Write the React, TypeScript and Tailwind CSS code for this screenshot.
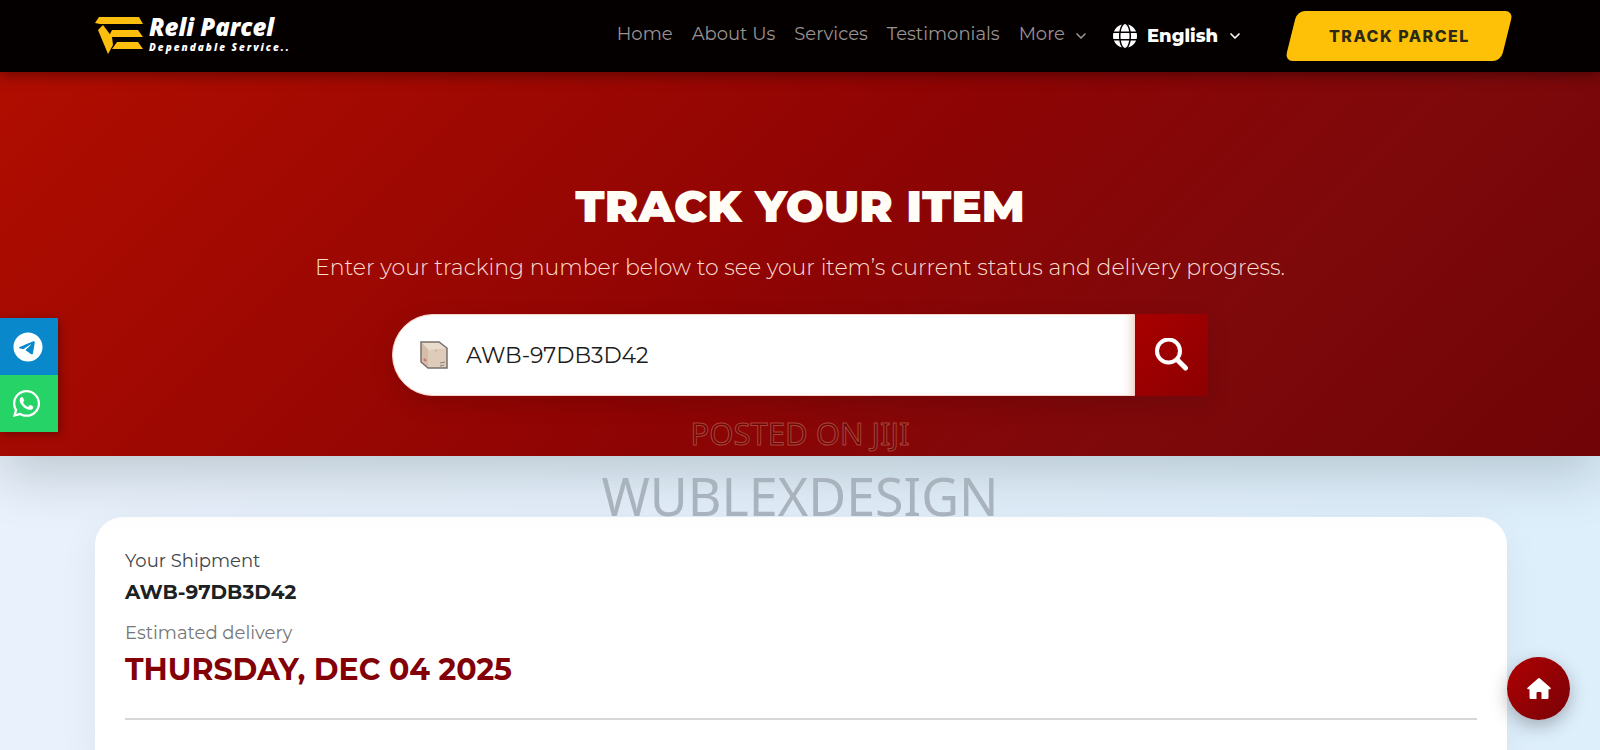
import { FiChevronDown } from "react-icons/fi";
import { FaGlobe, FaTelegram, FaWhatsapp } from "react-icons/fa6";

const links = [
  { label: "Home", href: "#home" },
  { label: "About Us", href: "#about" },
  { label: "Services", href: "#services" },
  { label: "Testimonials", href: "#testimonials" },
];

function Logo() {
  return (
    <a href="#home" className="flex items-center gap-1.5 text-white">
      <svg viewBox="0 0 48 38" className="h-[38px] w-12" fill="#fdbe0d" aria-hidden="true">
        <path d="M4 0H44L48 7H5L0 6Z" />
        <path d="M8 8L17 20L18 28L13 37L3 13Z" />
        <path d="M17 13H43L48 20H15L14 19Z" />
        <path d="M22 25H43L48 32H17Z" />
      </svg>
      <span className="flex flex-col pb-1.5 font-['Open_Sans'] font-extrabold italic">
        <span className="text-2xl leading-7">Reli Parcel</span>
        <span className="text-[10px] leading-3 tracking-[2px]">Dependable Service..</span>
      </span>
    </a>
  );
}

function ParcelIcon() {
  return (
    <svg viewBox="0 0 28 28" className="size-7 shrink-0" aria-hidden="true">
      <path d="M1 1H19L27 7V27H8L1 21Z" fill="#dfcbb9" />
      <path d="M1 1H19L27 7L8 9Z" fill="#eadccd" />
      <path d="M1 1L8 8V27L1 21Z" fill="#d5bda8" />
      <path d="M16 8V11" stroke="#c8b09b" fill="none" />
      <path d="M4 18L6 20" stroke="#d36a62" strokeWidth="2" />
      <path d="M20 22L25 21M20 25L24 24" stroke="#8b8078" fill="none" />
      <path d="M1 1H19L27 7V27H8L1 21Z" fill="none" stroke="#77706b" strokeWidth="1.5" />
    </svg>
  );
}

function Header() {
  return (
    <header className="relative z-10 flex h-[72px] items-center justify-between bg-[#050000] pr-[93px] pl-[95px] shadow-[0_4px_12px_rgba(0,0,0,0.35)]">
      <Logo />
      <div className="flex items-center">
        <nav className="flex items-center gap-[19px] pb-1 text-lg text-[#989292]">
          {links.map((link) => (
            <a key={link.label} href={link.href}>
              {link.label}
            </a>
          ))}
          <button type="button" className="flex items-center gap-2">
            More
            <FiChevronDown className="mt-1 size-4" strokeWidth={2.5} />
          </button>
        </nav>
        <label className="relative ml-6 flex items-center gap-2.5 text-white">
          <FaGlobe className="size-6" />
          <select
            aria-label="Language"
            className="appearance-none bg-transparent pr-6 text-lg font-extrabold"
          >
            <option>English</option>
          </select>
          <FiChevronDown
            className="pointer-events-none absolute right-0 size-4"
            strokeWidth={2.5}
          />
        </label>
        <a
          href="#track"
          className="ml-12 flex h-[50px] w-[216px] -skew-x-14 items-center justify-center rounded-lg bg-[#ffc107]"
        >
          <span className="skew-x-14 font-['Inter'] text-base font-extrabold tracking-[1.5px] text-[#2b2a14]">
            TRACK PARCEL
          </span>
        </a>
      </div>
    </header>
  );
}

function Hero() {
  return (
    <section
      id="track"
      className="relative flex h-96 flex-col items-center bg-[linear-gradient(135deg,#b00d00_0%,#8e0404_50%,#7e090b_75%,#700406_100%)] px-6 pt-[109px] shadow-[0_20px_50px_rgba(0,30,20,0.18)]"
    >
      <h1 className="text-[45px] leading-[50px] font-black text-[#fffdf5]">TRACK YOUR ITEM</h1>
      <p className="mt-[23px] text-center text-[22px] leading-7 font-light text-[#fbdcd0]">
        Enter your tracking number below to see your item’s current status and delivery progress.
      </p>
      <form
        className="mt-8 flex h-[82px] w-full max-w-[816px] rounded-l-[41px] shadow-[0_8px_24px_rgba(0,0,0,0.12)]"
        onSubmit={(e) => e.preventDefault()}
      >
        <label className="flex flex-1 items-center gap-[18px] rounded-l-[41px] border border-[#f5d3cb] bg-white pl-[27px] shadow-[inset_-8px_0_10px_-6px_rgba(180,90,50,0.3)]">
          <ParcelIcon />
          <input
            aria-label="Tracking number"
            defaultValue="AWB-97DB3D42"
            className="min-w-0 flex-1 bg-transparent text-[22px] text-[#1c1c1c] outline-none"
          />
        </label>
        <button
          type="submit"
          aria-label="Search"
          className="flex w-[73px] items-center justify-center bg-linear-to-br from-[#a90000] to-[#8c0002]"
        >
          <svg
            viewBox="0 0 34 34"
            className="size-[34px]"
            fill="none"
            stroke="#fff"
            strokeLinecap="round"
            aria-hidden="true"
          >
            <circle cx="13.5" cy="13" r="11.5" strokeWidth="4" />
            <path d="M22.5 22L30.5 30" strokeWidth="5" />
          </svg>
        </button>
      </form>
      <div className="pointer-events-none absolute inset-x-0 top-[338px] flex flex-col items-center font-['Noto_Sans']">
        <span className="text-[31px] leading-[46px] text-[#5c0a08]/60 [-webkit-text-stroke:1px_rgba(214,120,100,0.55)]">
          POSTED ON JIJI
        </span>
        <span className="mt-3 text-[52px] leading-[56px] text-[#a9b3bd]">WUBLEXDESIGN</span>
      </div>
    </section>
  );
}

function Shipment() {
  return (
    <main className="pr-[93px] pl-[95px] pt-[61px]">
      <section className="min-h-60 rounded-t-[28px] bg-white px-[30px] pt-[30px] shadow-[0_10px_40px_rgba(0,0,0,0.06)]">
        <p className="text-lg leading-7 text-[#42464a]">Your Shipment</p>
        <p className="mt-[3px] text-xl leading-7 font-bold text-[#1c2123]">AWB-97DB3D42</p>
        <p className="mt-[13px] text-lg leading-7 text-[#757779]">Estimated delivery</p>
        <h2 className="mt-[5px] text-3xl leading-9 font-bold text-[#820006]">
          THURSDAY, DEC 04 2025
        </h2>
        <hr className="mt-[30px] border-t-2 border-[#d6d7d8]" />
      </section>
    </main>
  );
}

export default function App() {
  return (
    <div className="h-screen overflow-hidden bg-linear-to-r from-[#e9f1fc] to-[#deeffc] font-['Montserrat','Inter',sans-serif]">
      <Header />
      <Hero />
      <Shipment />

      <div className="fixed top-1/2 left-0 z-20 flex -translate-y-1/2 flex-col shadow-[2px_2px_8px_rgba(0,0,0,0.3)]">
        <a
          href="#telegram"
          aria-label="Telegram"
          className="flex h-[57px] w-[58px] items-center bg-[#0a88cc] pl-[13px] text-white"
        >
          <FaTelegram className="size-[30px]" />
        </a>
        <a
          href="#whatsapp"
          aria-label="WhatsApp"
          className="flex h-[57px] w-[58px] items-center bg-[#25d366] pl-[11px] text-white"
        >
          <FaWhatsapp className="size-[31px]" />
        </a>
      </div>

      <a
        href="#home"
        aria-label="Back to home"
        className="fixed right-[30px] bottom-[30px] flex size-[63px] items-center justify-center rounded-full bg-linear-to-br from-[#b00000] to-[#780207] text-white shadow-[0_6px_18px_rgba(0,0,0,0.28)]"
      >
        <svg viewBox="0 0 24 21" className="h-[21px] w-6" fill="currentColor" aria-hidden="true">
          <path d="M11 .5Q12 -.3 13 .5L23.5 9.8Q24.2 11 23 11.3H21.5V19.5Q21.5 21 20 21H14.5V15Q14.5 14 13.5 14H10.5Q9.5 14 9.5 15V21H4Q2.5 21 2.5 19.5V11.3H1Q-.2 11 .5 9.8Z" />
        </svg>
      </a>
    </div>
  );
}
